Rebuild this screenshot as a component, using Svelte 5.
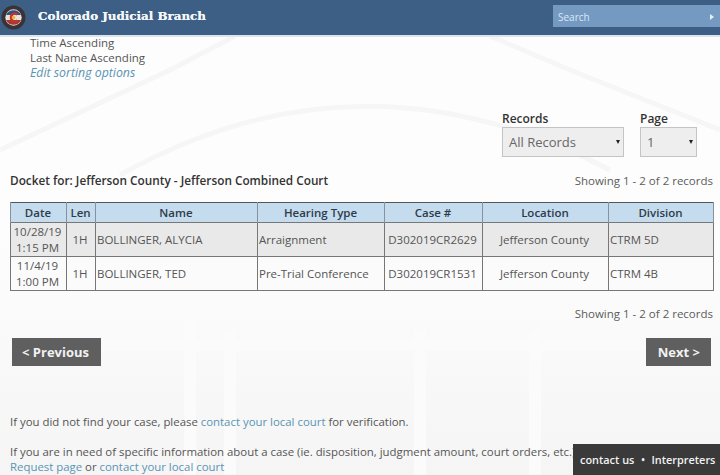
<script>
  const columns = [
    { label: 'Date', width: 56 },
    { label: 'Len', width: 29 },
    { label: 'Name', width: 162 },
    { label: 'Hearing Type', width: 127 },
    { label: 'Case #', width: 98 },
    { label: 'Location', width: 126 },
    { label: 'Division', width: 105 }
  ];

  const rows = [
    { date: '10/28/19', time: '1:15 PM', len: '1H', name: 'BOLLINGER, ALYCIA', type: 'Arraignment', caseNo: 'D302019CR2629', location: 'Jefferson County', division: 'CTRM 5D' },
    { date: '11/4/19', time: '1:00 PM', len: '1H', name: 'BOLLINGER, TED', type: 'Pre-Trial Conference', caseNo: 'D302019CR1531', location: 'Jefferson County', division: 'CTRM 4B' }
  ];
</script>

<div class="page">
  <!-- faint courthouse dome behind the content -->
  <svg class="backdrop" viewBox="0 0 720 475" aria-hidden="true">
    <g fill="none" stroke="#f6f6f6" stroke-width="5">
      <path d="M0 150 L170 70 L235 36" />
      <path d="M720 130 L570 70 L490 36" />
      <path d="M120 175 Q360 40 610 170" />
    </g>
    <g fill="none" stroke="#fbfbfb" stroke-width="12">
      <path d="M60 345 H660" />
      <path d="M190 318 V475" />
      <path d="M230 330 V475" />
      <path d="M420 330 V475" />
      <path d="M535 330 V475" />
    </g>
  </svg>

  <header class="topbar">
    <div class="brand">
      <svg class="seal" viewBox="0 0 26 26" aria-hidden="true">
        <circle cx="13" cy="13" r="12.5" fill="#3a3236" />
        <circle cx="13" cy="13" r="8.5" fill="#e9e3dc" />
        <path d="M5.2 10.5 A8.5 8.5 0 0 1 20.8 10.5 Z" fill="#34527f" />
        <path d="M5.2 15.5 A8.5 8.5 0 0 0 20.8 15.5 Z" fill="#a33a35" />
        <path d="M17 10 A4 4 0 1 0 17 16" fill="none" stroke="#c8342c" stroke-width="2.6" />
        <circle cx="13" cy="13" r="1.9" fill="#e8b634" />
      </svg>
      <span class="title">Colorado Judicial Branch</span>
    </div>
    <div class="search">
      <span>Search</span>
      <svg viewBox="0 0 6 8" aria-hidden="true"><path d="M1 1 L5 4 L1 7 Z" fill="#e8eef5" /></svg>
    </div>
  </header>

  <main class="content">
    <div class="sorting">
      <div>Time Ascending</div>
      <div>Last Name Ascending</div>
      <em>Edit sorting options</em>
    </div>

    <div class="filters">
      <div class="filter">
        <strong>Records</strong>
        <div class="select records"><span>All Records</span><i></i></div>
      </div>
      <div class="filter">
        <strong>Page</strong>
        <div class="select pager"><span>1</span><i></i></div>
      </div>
    </div>

    <div class="docket-line">
      <strong>Docket for: Jefferson County - Jefferson Combined Court</strong>
      <span>Showing 1 - 2 of 2 records</span>
    </div>

    <table>
      <colgroup>
        {#each columns as col}
          <col style="width: {col.width}px" />
        {/each}
      </colgroup>
      <thead>
        <tr>
          {#each columns as col}
            <th>{col.label}</th>
          {/each}
        </tr>
      </thead>
      <tbody>
        {#each rows as row}
          <tr>
            <td class="center">{row.date}<br />{row.time}</td>
            <td class="center">{row.len}</td>
            <td>{row.name}</td>
            <td>{row.type}</td>
            <td class="center">{row.caseNo}</td>
            <td class="center">{row.location}</td>
            <td>{row.division}</td>
          </tr>
        {/each}
      </tbody>
    </table>

    <div class="showing-bottom">Showing 1 - 2 of 2 records</div>

    <div class="pager-buttons">
      <div class="btn">&lt; Previous</div>
      <div class="btn">Next &gt;</div>
    </div>

    <p class="note first">If you did not find your case, please <span class="link">contact your local court</span> for verification.</p>
    <p class="note">If you are in need of specific information about a case (ie. disposition, judgment amount, court orders, etc.) please visit our<br /><span class="link">Request page</span> or <span class="link">contact your local court</span></p>
  </main>

  <div class="footer-tab">
    <span>contact us</span><b>•</b><span>Interpreters</span>
  </div>
</div>

<style>
  :global(body) {
    margin: 0;
    background: #fbfbfb;
  }

  .page {
    position: relative;
    width: 720px;
    height: 475px;
    overflow: hidden;
    font-family: "Open Sans", "Noto Sans", sans-serif;
    font-size: 12px;
    color: #4a4a4a;
    background: linear-gradient(#fdfdfd 50%, #f5f5f5);
  }

  .backdrop {
    position: absolute;
    inset: 0;
    width: 720px;
    height: 475px;
  }

  .topbar {
    position: relative;
    height: 30px;
    padding: 5px 0 0 1px;
    display: flex;
    justify-content: space-between;
    background: #3d5f85;
    border-bottom: 2px solid #dbe5ec;
  }

  .brand {
    display: flex;
    align-items: flex-start;
    gap: 12px;
  }

  .seal {
    width: 25px;
    height: 25px;
  }

  .title {
    font-family: "DejaVu Serif", serif;
    font-weight: 700;
    font-size: 11.9px;
    line-height: 23px;
    color: #f4f6f8;
    text-shadow: 0 0 0.6px #f4f6f8;
  }

  .search {
    width: 167px;
    height: 22px;
    box-sizing: border-box;
    padding: 1px 5px 0;
    display: flex;
    align-items: center;
    justify-content: space-between;
    background: #759ac2;
    color: #dde7f1;
    font-size: 10px;
  }

  .search svg {
    width: 6px;
    height: 8px;
  }

  .content {
    position: relative;
    padding: 0 7px 0 10px;
  }

  .sorting {
    padding-left: 20px;
    margin-top: -2px;
    height: 77px;
    line-height: 15px;
    font-size: 11.5px;
    color: #555;
  }

  .sorting em {
    font-size: 12.3px;
    color: #5a94b4;
  }

  .filters {
    display: flex;
    gap: 16px;
    padding-left: 492px;
    height: 47px;
  }

  .filter strong {
    display: block;
    margin-bottom: 1px;
    font-size: 12px;
    line-height: 14px;
    font-weight: 600;
    color: #333;
  }

  .select {
    position: relative;
    box-sizing: border-box;
    height: 30px;
    padding: 0 6px;
    display: flex;
    align-items: center;
    background: #eeeeee;
    border: 1px solid #c4c4c4;
    font-size: 13px;
    color: #666;
  }

  .select i {
    position: absolute;
    right: 3px;
    top: 12px;
    border: 2.5px solid transparent;
    border-top: 4px solid #222;
    border-bottom: 0;
  }

  .records {
    width: 122px;
  }

  .pager {
    width: 57px;
  }

  .docket-line {
    display: flex;
    justify-content: space-between;
    align-items: baseline;
    height: 30px;
    margin-top: 13px;
    line-height: 17px;
    font-size: 11.5px;
  }

  .docket-line strong {
    font-size: 11.8px;
    font-weight: 600;
    color: #333;
  }

  .docket-line span {
    color: #5c5c5c;
  }

  table {
    width: 703px;
    table-layout: fixed;
    border-collapse: collapse;
    font-size: 11.5px;
    color: #555;
    border: 1px solid #555;
  }

  th {
    height: 19px;
    padding: 0 1px 0 0;
    font-weight: 600;
    color: #2e3c48;
    background: #c5dbee;
    border-left: 1px solid #85919c;
    border-right: 1px solid #85919c;
  }

  td {
    height: 33px;
    padding: 0 1px;
    line-height: 16px;
    border: 1px solid #777;
    white-space: nowrap;
  }

  tbody tr:first-child td {
    background: #e9e9e9;
  }

  tbody tr:last-child td {
    background: #fbfbfb;
  }

  td.center {
    padding: 0 3px 0 1px;
    text-align: center;
  }

  .showing-bottom {
    margin-top: 14px;
    text-align: right;
    line-height: 17px;
    font-size: 11.5px;
    color: #5c5c5c;
  }

  .pager-buttons {
    display: flex;
    justify-content: space-between;
    margin: 16px 2px 0 2px;
  }

  .btn {
    height: 28px;
    padding: 0 12px 0 10px;
    display: flex;
    align-items: center;
    background: #5f5f5f;
    color: #f2f2f2;
    font-size: 13px;
    font-weight: 700;
  }

  .btn:last-child {
    padding: 0 11px 0 12px;
  }

  .note {
    margin: 0;
    line-height: 15px;
    font-size: 11.4px;
    white-space: nowrap;
    color: #555;
  }

  .note.first {
    margin: 48px 0 15px;
  }

  .link {
    color: #5a94b4;
  }

  .footer-tab {
    position: absolute;
    right: 0;
    bottom: 0;
    width: 147px;
    height: 31px;
    box-sizing: border-box;
    padding: 8px 0 0 7px;
    display: flex;
    gap: 7px;
    background: #3a3a3a;
    color: #f2f2f2;
    font-size: 10.9px;
    font-weight: 600;
    white-space: nowrap;
  }

  .footer-tab b {
    font-size: 8px;
    line-height: 16px;
  }
</style>
